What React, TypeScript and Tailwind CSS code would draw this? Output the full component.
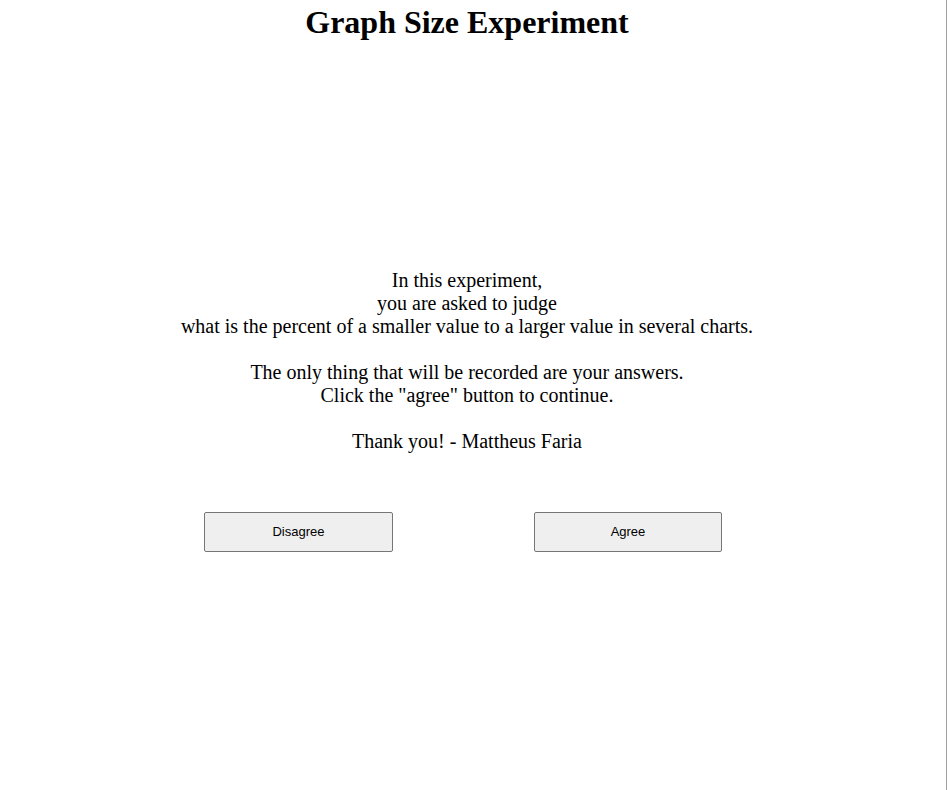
export default function App() {
  return (
    <div className="h-screen w-[947px] overflow-hidden bg-white border-r border-[#a0a0a0] font-['Liberation_Serif',serif] text-black">
      <div className="w-[934px] flex flex-col items-center">
        <h1 className="mt-[4px] text-[32px] font-bold leading-[37px]">Graph Size Experiment</h1>

        <p className="mt-[228px] text-center text-[20px] leading-[23px]">
          In this experiment,
          <br />
          you are asked to judge
          <br />
          what is the percent of a smaller value to a larger value in several charts.
          <br />
          <br />
          The only thing that will be recorded are your answers.
          <br />
          Click the "agree" button to continue.
          <br />
          <br />
          Thank you! - Mattheus Faria
        </p>
      </div>

      <div className="mt-[59px] flex pl-[204px] gap-[141px] font-['Liberation_Sans',Arial,sans-serif] text-[13px]">
        <button className="w-[189px] h-[40px] bg-[#efefef] border border-[#767676] rounded-[2px] text-black">
          Disagree
        </button>
        <button className="w-[188px] h-[40px] bg-[#efefef] border border-[#767676] rounded-[2px] text-black">
          Agree
        </button>
      </div>
    </div>
  )
}
